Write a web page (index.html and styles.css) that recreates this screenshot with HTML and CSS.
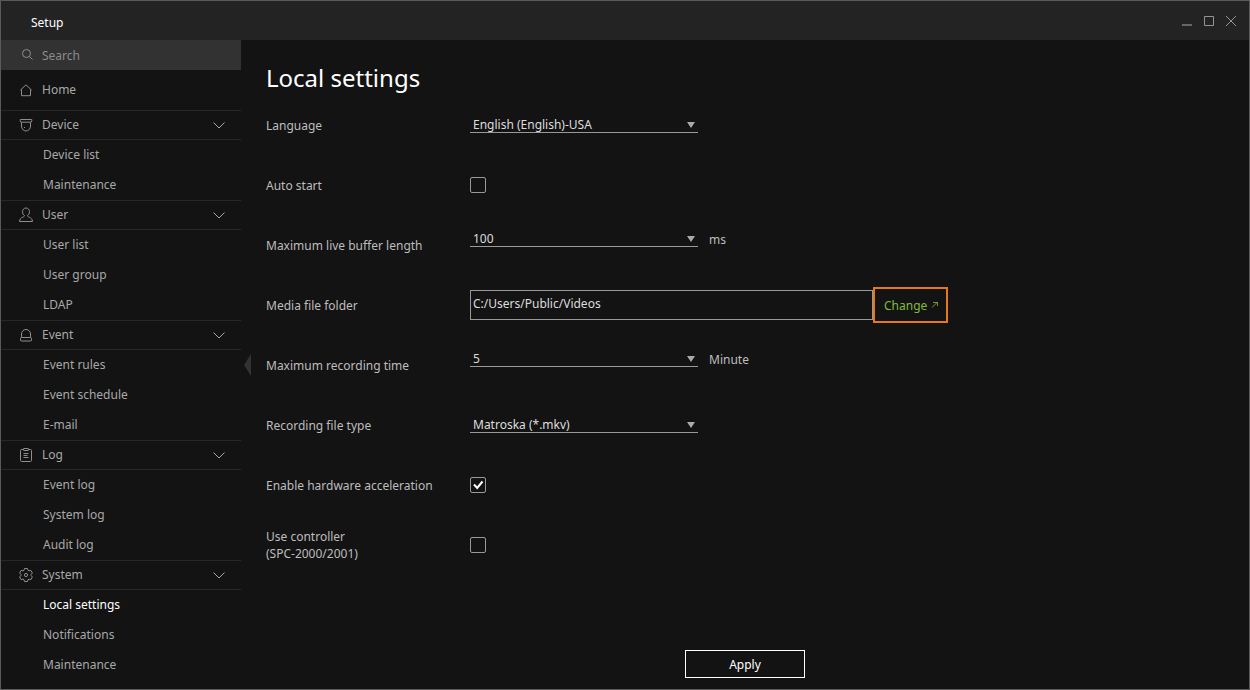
FILE: index.html
```html
<!DOCTYPE html>
<html lang="en">
<head>
<meta charset="utf-8">
<title>Setup</title>
<link rel="stylesheet" href="styles.css">
</head>
<body>
<svg class="defs" aria-hidden="true">
  <symbol id="chevron" viewBox="0 0 14 8"><path d="M1.5 1.5 7 7l5.500-5.500"/></symbol>
  <symbol id="arrow" viewBox="0 0 8 6"><path d="M0 0h8L4 6z"/></symbol>
</svg>
<div class="window">
  <header class="titlebar">
    <span class="titlebar-text">Setup</span>
    <div class="window-buttons">
      <button type="button" aria-label="Minimize"><svg viewBox="0 0 12 12"><path d="M1 9h10" stroke-width="2"/></svg></button>
      <button type="button" aria-label="Maximize"><svg viewBox="0 0 12 12"><path d="M1.500 1.500h9v9h-9z"/></svg></button>
      <button type="button" aria-label="Close"><svg viewBox="0 0 12 12"><path d="m1 1 10 10M11 1 1 11"/></svg></button>
    </div>
  </header>
  <div class="body">
    <nav class="sidebar" aria-label="Setup menu">
      <div class="search">
        <svg class="icon" viewBox="0 0 16 16" aria-hidden="true"><circle cx="8.500" cy="6.500" r="4"/><path d="m11.500 9.500 3 3"/></svg>
        <input type="text" placeholder="Search" aria-label="Search">
      </div>
      <a class="home" href="#home"><svg class="icon" viewBox="0 0 16 16" aria-hidden="true"><path d="M2.300 8.200 8 2.800l5.700 5.400M3.500 7.500v6.200h9V7.500"/></svg>Home</a>

      <section>
        <button type="button" class="group"><svg class="icon" viewBox="0 0 16 16" aria-hidden="true"><path d="M2.500 2.500h11q.6 0 .4.800l-.7 1.900H2.800l-.7-1.900q-.2-.8.400-.8zM3.500 5.500V9c0 2.800 2 5 4.500 5s4.500-2.200 4.500-5V5.500M6.500 10v1"/></svg><span>Device</span><svg class="chevron"><use href="#chevron"/></svg></button>
        <a class="item" href="#device-list">Device list</a>
        <a class="item" href="#device-maintenance">Maintenance</a>
      </section>
      <section>
        <button type="button" class="group"><svg class="icon" viewBox="0 0 16 16" aria-hidden="true"><path d="M6.500 8.500C5.300 7.800 4.500 6.500 4.500 4.700 4.500 2.500 6 1 8 1s3.500 1.500 3.500 3.700c0 1.800-.8 3.100-2 3.800 0 1 .8 1.300 2 1.800 1.600.7 2.800 1.800 3 4.200h-13c.2-2.400 1.400-3.500 3-4.200 1.200-.5 2-.8 2-1.800z"/></svg><span>User</span><svg class="chevron"><use href="#chevron"/></svg></button>
        <a class="item" href="#user-list">User list</a>
        <a class="item" href="#user-group">User group</a>
        <a class="item" href="#ldap">LDAP</a>
      </section>
      <section>
        <button type="button" class="group"><svg class="icon" viewBox="0 0 16 16" aria-hidden="true"><path d="M3.500 10.500V7a4.500 4.500 0 0 1 9 0v3.500"/><rect x="2.500" y="10.500" width="11" height="3.500" rx="1"/></svg><span>Event</span><svg class="chevron"><use href="#chevron"/></svg></button>
        <a class="item" href="#event-rules">Event rules</a>
        <a class="item" href="#event-schedule">Event schedule</a>
        <a class="item" href="#e-mail">E-mail</a>
      </section>
      <section>
        <button type="button" class="group"><svg class="icon" viewBox="0 0 16 16" aria-hidden="true"><path d="M5.500 2.500h-2a1 1 0 0 0-1 1v10a1 1 0 0 0 1 1h9a1 1 0 0 0 1-1v-10a1 1 0 0 0-1-1h-2"/><rect x="5.500" y="1.500" width="5" height="2" rx=".5"/><path d="M5.500 6.500h5M5.500 8.500h4M5.500 10.500h5"/></svg><span>Log</span><svg class="chevron"><use href="#chevron"/></svg></button>
        <a class="item" href="#event-log">Event log</a>
        <a class="item" href="#system-log">System log</a>
        <a class="item" href="#audit-log">Audit log</a>
      </section>
      <section>
        <button type="button" class="group"><svg class="icon" viewBox="0 0 16 16" aria-hidden="true"><path d="M6.500 1.500h3l.5 1.800 1 .6 1.900-.5 1.500 2.600-1.300 1.400v1.200l1.300 1.400-1.500 2.600-1.900-.5-1 .6-.5 1.800h-3L6 12.700l-1-.6-1.900.5L1.600 10l1.300-1.400V7.400L1.600 6l1.500-2.600 1.900.5 1-.6z" stroke-linejoin="round"/><circle cx="8" cy="8" r="1.600"/></svg><span>System</span><svg class="chevron"><use href="#chevron"/></svg></button>
        <a class="item current" href="#local-settings" aria-current="page">Local settings</a>
        <a class="item" href="#notifications">Notifications</a>
        <a class="item" href="#system-maintenance">Maintenance</a>
      </section>
      <button type="button" class="collapse" aria-label="Collapse menu"><svg viewBox="0 0 7 22"><path d="M7 0v22L0 11z"/></svg></button>
    </nav>

    <main class="content">
      <h1>Local settings</h1>
      <form class="form">
        <div class="row">
          <label for="language">Language</label>
          <div class="field">
            <div class="select"><select id="language"><option>English (English)-USA</option></select><svg><use href="#arrow"/></svg></div>
          </div>
        </div>
        <div class="row">
          <label for="autostart">Auto start</label>
          <div class="field"><span class="check"><input type="checkbox" id="autostart"></span></div>
        </div>
        <div class="row">
          <label for="buffer">Maximum live buffer length</label>
          <div class="field with-unit">
            <div class="select"><select id="buffer"><option>100</option></select><svg><use href="#arrow"/></svg></div>
            <span class="unit">ms</span>
          </div>
        </div>
        <div class="row">
          <label for="folder">Media file folder</label>
          <div class="field">
            <input type="text" class="path" id="folder" value="C:/Users/Public/Videos">
            <button type="button" class="change">Change<svg viewBox="0 0 8 8" aria-hidden="true"><path d="M1 6.500l5.500-5.500M2 1.500h4.500V5"/></svg></button>
          </div>
        </div>
        <div class="row">
          <label for="rectime">Maximum recording time</label>
          <div class="field with-unit">
            <div class="select"><select id="rectime"><option>5</option></select><svg><use href="#arrow"/></svg></div>
            <span class="unit">Minute</span>
          </div>
        </div>
        <div class="row">
          <label for="filetype">Recording file type</label>
          <div class="field">
            <div class="select"><select id="filetype"><option>Matroska (*.mkv)</option></select><svg><use href="#arrow"/></svg></div>
          </div>
        </div>
        <div class="row">
          <label for="hwaccel">Enable hardware acceleration</label>
          <div class="field"><span class="check"><input type="checkbox" id="hwaccel" checked><svg viewBox="0 0 16 16" aria-hidden="true"><path d="m4 7.500 3.200 3.500L12.500 4.500"/></svg></span></div>
        </div>
        <div class="row">
          <label for="controller">Use controller<br>(SPC-2000/2001)</label>
          <div class="field"><span class="check"><input type="checkbox" id="controller"></span></div>
        </div>
        <div class="actions"><button type="submit" class="apply">Apply</button></div>
      </form>
    </main>
  </div>
</div>
</body>
</html>
```
FILE: styles.css
```css
* { box-sizing: border-box; }

body {
  margin: 0;
  background: #131313;
  color: #bdbdbd;
  font: 12px/17px "Noto Sans", "Open Sans", sans-serif;
}

button, input, select { font: inherit; color: inherit; }
button { background: none; border: 0; padding: 0; cursor: pointer; }
a { color: inherit; text-decoration: none; }
svg { fill: none; stroke: currentColor; }

.defs { display: none; }

.window {
  display: flex;
  flex-direction: column;
  min-height: 100vh;
  border: 1px solid #5a5a5a;
}

/* Title bar */
.titlebar {
  display: flex;
  justify-content: space-between;
  align-items: center;
  height: 39px;
  padding: 4px 12px 0 30px;
  background: #232323;
}
.titlebar-text { color: #fff; }
.window-buttons { display: flex; gap: 10px; padding-bottom: 2px; color: #949494; }
.window-buttons button { display: flex; }
.window-buttons svg { width: 12px; height: 12px; }
.window-buttons button:first-child { color: #666; padding-top: 1px; }

.body { display: flex; flex: 1; }

/* Sidebar */
.sidebar { position: relative; flex: none; width: 240px; color: #a8a8a8; }
.icon { flex: none; width: 16px; height: 16px; stroke: #8e8e8e; }

.search, .home, .group {
  display: flex;
  align-items: center;
  gap: 8px;
  padding: 0 15px 1px 17px;
}
.search { height: 30px; padding-bottom: 0; background: #323232; color: #8b8b8b; }
.search input {
  flex: 1;
  min-width: 0;
  padding: 0;
  border: 0;
  background: none;
  outline: 0;
}
.search input::placeholder { color: #8b8b8b; opacity: 1; }
.home { height: 40px; }
.group {
  width: 100%;
  height: 30px;
  border: solid #272727;
  border-width: 1px 0;
  text-align: left;
}
.group span { flex: 1; }
.chevron { width: 14px; height: 8px; }
.item { display: block; padding: 6px 16px 7px 42px; }
.current { color: #fff; }

.collapse { position: absolute; left: 243px; top: 50%; margin-top: -11px; }
.collapse svg { display: block; width: 7px; height: 22px; fill: #333; stroke: none; }

/* Settings form */
.content {
  display: flex;
  flex: 1;
  flex-direction: column;
  min-width: 0;
  padding: 21px 0 11px;
}
h1 {
  margin: 0;
  padding: 0 25px 1px;
  color: #fff;
  font-size: 24px;
  font-weight: 400;
  line-height: 33px;
}
.form { display: flex; flex: 1; flex-direction: column; }
.row {
  display: grid;
  grid-template-columns: 204px minmax(0, 1fr);
  align-items: center;
  min-height: 60px;
  padding: 0 25px;
}
.field { display: flex; align-items: center; color: #ddd; }
.with-unit { gap: 11px; padding-bottom: 12px; }
.unit { color: #bdbdbd; }

.select { position: relative; width: 228px; }
.select select {
  display: block;
  width: 100%;
  height: 16px;
  padding: 0 20px 0 3px;
  border: 0;
  border-bottom: 1px solid #999;
  border-radius: 0;
  background: #131313;
  appearance: none;
  line-height: 15px;
  outline: 0;
}
.select svg {
  position: absolute;
  right: 3px;
  top: 5px;
  width: 8px;
  height: 6px;
  fill: #aaa;
  stroke: none;
  pointer-events: none;
}

.check { position: relative; display: flex; }
.check input {
  width: 16px;
  height: 16px;
  margin: 0;
  border: 1px solid #999;
  border-radius: 2px;
  appearance: none;
}
.check svg {
  position: absolute;
  inset: 0;
  stroke: #fff;
  stroke-width: 2;
  pointer-events: none;
}
.check input:not(:checked) + svg { display: none; }

.path {
  flex: 0 1 403px;
  min-width: 0;
  height: 30px;
  padding: 0 2px 3px;
  border: 1px solid #999;
  background: none;
  outline: 0;
}
.change {
  display: flex;
  align-items: center;
  gap: 4px;
  height: 36px;
  padding: 0 7px 0 9px;
  border: 2px solid #e77817;
  color: #82bc3c;
}
.change svg { width: 8px; height: 8px; stroke-width: .8; }

.actions { display: flex; justify-content: center; margin-top: auto; }
.apply { width: 120px; height: 28px; border: 1px solid #fff; color: #fff; }
```
